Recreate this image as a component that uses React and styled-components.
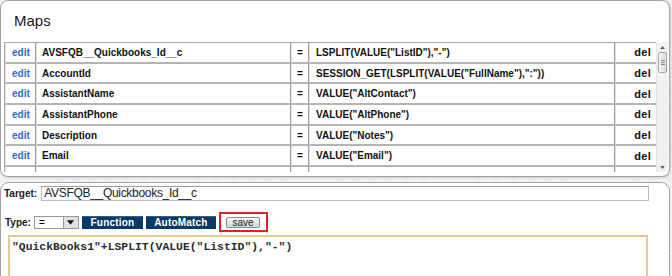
import React from 'react';
import styled, { createGlobalStyle } from 'styled-components';

const GlobalStyle = createGlobalStyle`
    html, body {
        margin: 0;
        padding: 0;
        background: #ffffff;
        font-family: "Liberation Sans", Arial, sans-serif;
    }
`;

const Page = styled.div`
    width: 672px;
    height: 276px;
    overflow: hidden;
    background: repeating-linear-gradient(
        45deg,
        #e6eaee 0px,
        #e6eaee 1px,
        #f3f5f7 1px,
        #f3f5f7 3px
    );
`;

const MapsPanel = styled.div`
    box-sizing: border-box;
    width: 670px;
    height: 177px;
    background: #fff;
    border: 1px solid #a4a4a4;
    border-radius: 8px;
    box-shadow: 1px 1px 2px rgba(0, 0, 0, 0.15);
    display: flex;
    flex-direction: column;
`;

const Title = styled.div`
    height: 41px;
    padding-left: 13px;
    box-sizing: border-box;
    padding-top: 11px;
    font-size: 15px;
    color: #1a1a1a;
`;

const ListBody = styled.div`
    display: flex;
    height: 130px;
    padding: 0 1px 0 3px;
    overflow: hidden;
`;

const ListScroll = styled.div`
    width: 652px;
    height: 130px;
    overflow: hidden;
`;

const MapTable = styled.table`
    width: 652px;
    border-collapse: separate;
    border-spacing: 0;
    table-layout: fixed;
    border-top: 1px solid #a8a8a8;
    border-left: 1px solid #a8a8a8;
    font-size: 10px;
    font-weight: bold;
    color: #111;
`;

const Row = styled.tr`
    height: 20.7px;
`;

const Cell = styled.td`
    box-sizing: border-box;
    padding: 0 ${(p) => (p.$pad ? p.$pad : '5px')};
    border-right: 1px solid #9c9c9c;
    border-bottom: 2px solid #b4b4b4;
    border-left: 1px solid #e2e2e2;
    text-align: ${(p) => p.$align || 'left'};
    white-space: nowrap;
    overflow: hidden;
    vertical-align: middle;
`;

const EditLink = styled.span`
    color: #2e68d2;
`;

const DelText = styled.span`
    font-size: 11px;
    letter-spacing: 0.3px;
`;

const Scrollbar = styled.div`
    width: 12px;
    height: 130px;
    box-sizing: border-box;
    background: #f1f1f1;
    border-left: 1px solid #e4e4e4;
    display: flex;
    flex-direction: column;
    align-items: center;
`;

const Arrow = styled.div`
    height: 10px;
    width: 12px;
    display: flex;
    align-items: center;
    justify-content: center;
`;

const Thumb = styled.div`
    width: 9px;
    height: 21px;
    box-sizing: border-box;
    border: 1px solid #a9a9a9;
    border-radius: 2px;
    background: linear-gradient(to right, #f4f4f4, #dcdcdc);
    display: flex;
    flex-direction: column;
    justify-content: center;
    align-items: center;
    gap: 1px;
`;

const Grip = styled.div`
    width: 4px;
    height: 1px;
    background: #8a8a8a;
`;

const Track = styled.div`
    flex: 1;
`;

const Gap = styled.div`
    height: 5px;
`;

const EditPanel = styled.div`
    box-sizing: border-box;
    width: 670px;
    height: 120px;
    background: #fff;
    border: 1px solid #a4a4a4;
    border-bottom: none;
    border-radius: 9px 9px 0 0;
    padding: 3px 0 0 3px;
`;

const FieldRow = styled.div`
    display: flex;
    align-items: center;
    gap: ${(p) => p.$gap || '4px'};
    margin-top: ${(p) => p.$top || '0px'};
`;

const Label = styled.span`
    font-size: 10px;
    font-weight: bold;
    color: #222;
    padding-left: ${(p) => p.$indent || '0px'};
`;

const TargetInput = styled.div`
    box-sizing: border-box;
    width: 608px;
    height: 15px;
    border: 1px solid #bdbdbd;
    border-top-color: #9a9a9a;
    font-size: 12px;
    letter-spacing: -0.3px;
    line-height: 13px;
    padding-left: 2px;
    color: #222;
`;

const SelectBox = styled.div`
    box-sizing: border-box;
    width: 45px;
    height: 13px;
    border: 1px solid #9a9a9a;
    display: flex;
    align-items: stretch;
    font-size: 10px;
`;

const SelectValue = styled.span`
    flex: 1;
    padding-left: 4px;
    line-height: 11px;
`;

const SelectArrow = styled.span`
    width: 14px;
    background: #e2e2e2;
    border-left: 1px solid #9a9a9a;
    display: flex;
    align-items: center;
    justify-content: center;
`;

const NavyButton = styled.div`
    box-sizing: border-box;
    width: ${(p) => p.$w};
    height: 13px;
    background: #0b386a;
    color: #fff;
    font-size: 10px;
    font-weight: bold;
    display: flex;
    align-items: center;
    justify-content: center;
    border-top: 1px solid #3a5d86;
    letter-spacing: 0.2px;
`;

const Highlight = styled.div`
    box-sizing: border-box;
    width: 49px;
    height: 20px;
    border: 2px solid #e3202a;
    display: flex;
    align-items: center;
    padding-left: 5px;
`;

const SaveButton = styled.div`
    box-sizing: border-box;
    width: 34px;
    height: 11px;
    border: 1px solid #8c8c8c;
    border-radius: 2px;
    background: linear-gradient(#f6f6f6, #d6d6d6);
    font-size: 10px;
    line-height: 9px;
    text-align: center;
    color: #222;
`;

const Formula = styled.div`
    box-sizing: border-box;
    width: 640px;
    height: 60px;
    margin: 3px 0 0 4px;
    border: 2px solid #e6c98f;
    border-bottom: none;
    padding: 4px 0 0 2px;
    font-family: "Liberation Mono", "Courier New", monospace;
    font-size: 11.4px;
    font-weight: bold;
    color: #2a2a2a;
`;

const rows = [
    ['AVSFQB__Quickbooks_Id__c', 'LSPLIT(VALUE("ListID"),"-")'],
    ['AccountId', 'SESSION_GET(LSPLIT(VALUE("FullName"),":"))'],
    ['AssistantName', 'VALUE("AltContact")'],
    ['AssistantPhone', 'VALUE("AltPhone")'],
    ['Description', 'VALUE("Notes")'],
    ['Email', 'VALUE("Email")'],
];

const Tri = ({ up, size = 5, color = '#555' }) => (
    <svg width={size} height={size - 2} viewBox="0 0 6 4">
        <path d={up ? 'M0 4 L3 0 L6 4 Z' : 'M0 0 L6 0 L3 4 Z'} fill={color} />
    </svg>
);

const App = () => {
    return (
        <Page>
            <GlobalStyle />
            <MapsPanel>
                <Title>Maps</Title>
                <ListBody>
                    <ListScroll>
                        <MapTable>
                            <colgroup>
                                <col style={{ width: 31 }} />
                                <col style={{ width: 255 }} />
                                <col style={{ width: 18 }} />
                                <col style={{ width: 306 }} />
                                <col style={{ width: 42 }} />
                            </colgroup>
                            <tbody>
                                {rows.map(([name, value]) => (
                                    <Row key={name}>
                                        <Cell $pad="6px" $align="left">
                                            <EditLink>edit</EditLink>
                                        </Cell>
                                        <Cell>{name}</Cell>
                                        <Cell $pad="0" $align="center">=</Cell>
                                        <Cell $pad="6px">{value}</Cell>
                                        <Cell $pad="5px" $align="right">
                                            <DelText>del</DelText>
                                        </Cell>
                                    </Row>
                                ))}
                                <Row>
                                    <Cell />
                                    <Cell />
                                    <Cell />
                                    <Cell />
                                    <Cell />
                                </Row>
                            </tbody>
                        </MapTable>
                    </ListScroll>
                    <Scrollbar>
                        <Arrow>
                            <Tri up />
                        </Arrow>
                        <Thumb>
                            <Grip />
                            <Grip />
                            <Grip />
                        </Thumb>
                        <Track />
                        <Arrow>
                            <Tri />
                        </Arrow>
                    </Scrollbar>
                </ListBody>
            </MapsPanel>
            <Gap />
            <EditPanel>
                <FieldRow $gap="4px">
                    <Label>Target:</Label>
                    <TargetInput>AVSFQB__Quickbooks_Id__c</TargetInput>
                </FieldRow>
                <FieldRow $gap="3px" $top="11px">
                    <Label $indent="1px">Type:</Label>
                    <SelectBox>
                        <SelectValue>=</SelectValue>
                        <SelectArrow>
                            <Tri size={7} color="#111" />
                        </SelectArrow>
                    </SelectBox>
                    <NavyButton $w="61px">Function</NavyButton>
                    <NavyButton $w="70px">AutoMatch</NavyButton>
                    <Highlight>
                        <SaveButton>save</SaveButton>
                    </Highlight>
                </FieldRow>
                <Formula>"QuickBooks1"+LSPLIT(VALUE("ListID"),"-")</Formula>
            </EditPanel>
        </Page>
    );
};

export default App;
